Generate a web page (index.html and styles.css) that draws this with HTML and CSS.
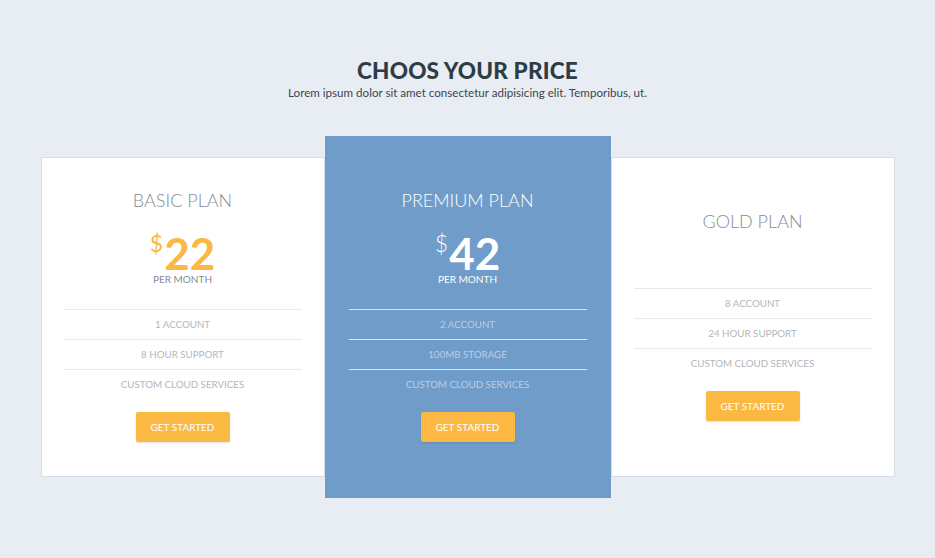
FILE: index.html
```html
<!DOCTYPE html>
<html lang="en">
<head>
  <meta charset="UTF-8" />
  <meta name="viewport" content="width=device-width, initial-scale=1.0" />
  <title>Choose your price</title>
  <link rel="stylesheet" href="styles.css">
</head>
<body>
  <header class="intro">
    <h1>CHOOS YOUR PRICE</h1>
    <p>Lorem ipsum dolor sit amet consectetur adipisicing elit. Temporibus, ut.</p>
  </header>

  <section class="pricing">
    <div class="plan">
      <h2 class="plan-title">BASIC PLAN</h2>
      <div class="price"><span class="currency">$</span><span class="amount">22</span></div>
      <div class="period">PER MONTH</div>
      <ul class="features">
        <li>1 ACCOUNT</li>
        <li>8 HOUR SUPPORT</li>
        <li>CUSTOM CLOUD SERVICES</li>
      </ul>
      <a class="btn" href="#">GET STARTED</a>
    </div>

    <div class="plan featured">
      <h2 class="plan-title">PREMIUM PLAN</h2>
      <div class="price"><span class="currency">$</span><span class="amount">42</span></div>
      <div class="period">PER MONTH</div>
      <ul class="features">
        <li>2 ACCOUNT</li>
        <li>100MB STORAGE</li>
        <li>CUSTOM CLOUD SERVICES</li>
      </ul>
      <a class="btn" href="#">GET STARTED</a>
    </div>

    <div class="plan">
      <h2 class="plan-title no-price">GOLD PLAN</h2>
      <ul class="features">
        <li>8 ACCOUNT</li>
        <li>24 HOUR SUPPORT</li>
        <li>CUSTOM CLOUD SERVICES</li>
      </ul>
      <a class="btn" href="#">GET STARTED</a>
    </div>
  </section>
</body>
</html>
```

FILE: styles.css
```css
body {
  margin: 0;
  background-color: #e8edf3;
  font-family: Lato, "Open Sans", sans-serif;
  color: #3d4450;
}
.intro {
  text-align: center;
  padding-top: 57px;
}
.intro h1 {
  margin: 0;
  font-size: 22.5px;
  line-height: 28px;
  font-weight: 900;
  color: #2d3c46;
  letter-spacing: 0.2px;
}
.intro p {
  margin: 0;
  font-size: 11.6px;
  line-height: 16px;
}
.pricing {
  display: flex;
  align-items: center;
  width: 854px;
  margin: 35px auto 0;
}
.plan {
  box-sizing: border-box;
  width: 284px;
  height: 320px;
  background: #fff;
  border: 1px solid #d7dde5;
  padding: 0 22px 4px;
  display: flex;
  flex-direction: column;
  justify-content: center;
  text-align: center;
}
.plan.featured {
  width: 286px;
  height: 362px;
  background: #6f9cc9;
  border-color: #6f9cc9;
  padding: 0 23px 4px;
}
.plan-title {
  margin: 0;
  font-size: 18px;
  line-height: 24px;
  font-weight: 300;
  color: #878c96;
}
.plan-title.no-price {
  margin-bottom: 32px;
}
.price {
  display: flex;
  justify-content: center;
  margin-top: 21px;
  height: 40px;
  color: #fbb843;
}
.currency {
  font-size: 23px;
  line-height: 20px;
  margin-right: 1px;
}
.amount {
  font-size: 44px;
  line-height: 40px;
  font-weight: 700;
}
.period {
  font-size: 10px;
  line-height: 13px;
  color: #878c96;
}
.features {
  list-style: none;
  margin: 23px 0 0;
  padding: 0;
}
.features li {
  border-top: 1px solid #e6e9ed;
  line-height: 29px;
  font-size: 9.75px;
  color: #b3b6bc;
}
.btn {
  align-self: center;
  margin-top: 13px;
  width: 94px;
  height: 30px;
  line-height: 30px;
  background: #fbb843;
  border-radius: 2px;
  box-shadow: 0 1px 2px rgba(0, 0, 0, 0.12);
  color: #fff;
  font-size: 10px;
  text-decoration: none;
}
.featured .plan-title,
.featured .price,
.featured .period {
  color: #fff;
}
.featured .currency {
  font-weight: 300;
}
.featured .features li {
  border-top-color: #d4e6fb;
  color: #bccde3;
}
```
